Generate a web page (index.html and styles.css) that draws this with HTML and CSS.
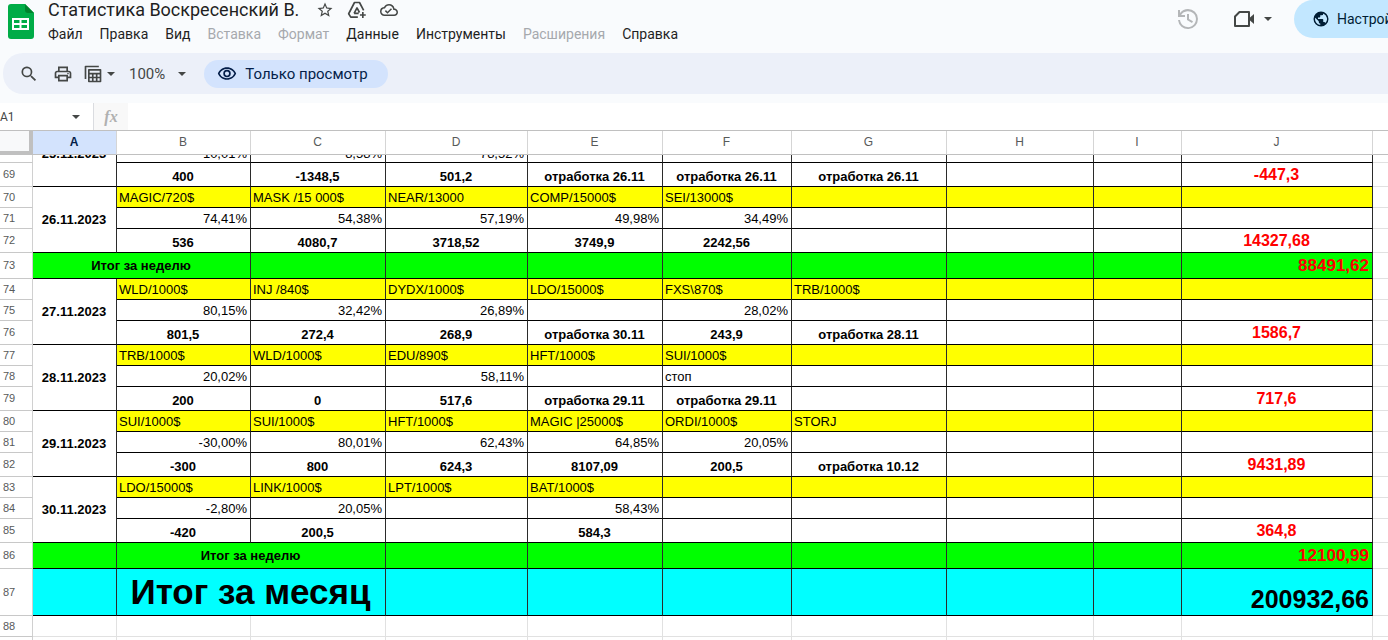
FILE: index.html
```
<!DOCTYPE html>
<html lang="ru">
<head>
<meta charset="utf-8">
<title>Статистика Воскресенский В.</title>
<link rel="stylesheet" href="styles.css">
</head>
<body>
<header class="top">
  <svg class="logo" viewBox="0 0 26 35" aria-hidden="true"><path fill="#00ac47" d="M3 0h14l9 9v23a3 3 0 0 1-3 3H3a3 3 0 0 1-3-3V3a3 3 0 0 1 3-3z"/><path fill="#00832d" d="M17 0l9 9h-6a3 3 0 0 1-3-3z"/><path fill="#fff" fill-rule="evenodd" d="M4 14h17v12H4zM6 16v3h5.500v-3zM13.500 16v3H19v-3zM6 21v3h5.500v-3zM13.500 21v3H19v-3z"/></svg>
  <div class="titles">
    <div class="title-row">
      <h1 class="title">Статистика Воскресенский В.</h1>
      <button class="icon-btn" aria-label="Пометить"><svg class="icon-18" viewBox="0 0 24 24"><path d="M22 9.240l-7.190-.620L12 2 9.190 8.630 2 9.240l5.460 4.730L5.820 21 12 17.270 18.180 21l-1.630-7.030L22 9.240zM12 15.400l-3.760 2.270 1-4.280-3.320-2.880 4.380-.380L12 6.100l1.710 4.040 4.380.380-3.320 2.880 1 4.280L12 15.400z"/></svg></button>
      <button class="icon-btn" aria-label="Добавить на Диск"><svg class="icon-20 line" viewBox="0 0 24 24"><path d="M13 20.500H4.500L2 16.500 9 3h6l5 9.500M8.500 16L12 9.500l3 5.500M8.500 16H14M19 14.500v7M15.500 18h7"/></svg></button>
      <button class="icon-btn" aria-label="Сохранено"><svg class="icon-18" viewBox="0 0 24 24"><path d="M19.350 10.040A7.490 7.490 0 0 0 12 4C9.110 4 6.600 5.640 5.350 8.040A5.994 5.994 0 0 0 0 14c0 3.310 2.690 6 6 6h13c2.760 0 5-2.240 5-5 0-2.640-2.050-4.780-4.650-4.960zM19 18H6c-2.210 0-4-1.790-4-4 0-2.050 1.530-3.760 3.560-3.970l1.070-.110.500-.950A5.469 5.469 0 0 1 12 6c2.620 0 4.880 1.860 5.390 4.430l.300 1.500 1.530.110A2.980 2.980 0 0 1 22 15c0 1.650-1.350 3-3 3zm-9-3.820l-2.090-2.090L6.500 13.500 10 17l6.010-6.010-1.410-1.410z"/></svg></button>
    </div>
    <nav class="menu">
      <button>Файл</button><button>Правка</button><button>Вид</button><button disabled>Вставка</button><button disabled>Формат</button><button>Данные</button><button>Инструменты</button><button disabled>Расширения</button><button>Справка</button>
    </nav>
  </div>
  <div class="actions">
    <button class="icon-btn muted" aria-label="История версий"><svg class="icon-24" viewBox="0 0 24 24"><path d="M12 2a10 10 0 0 0-8 4V3H2v7h7V8H5.100A8 8 0 1 1 4 13H2A10 10 0 1 0 12 2zm-1 5v6l5 3 1-1.700-4-2.400V7z"/></svg></button>
    <button class="icon-btn meet" aria-label="Видеовстреча"><svg class="icon-24" viewBox="0 0 24 24"><path fill="none" stroke="#444746" stroke-width="2" stroke-linejoin="round" d="M7.500 5H17v14H3V9.500z"/><path d="M18 10.500L22 7v10l-4-3.500z"/></svg><span class="caret"></span></button>
    <button class="share"><svg class="icon-18" viewBox="0 0 24 24"><path d="M12 2a10 10 0 1 0 0 20 10 10 0 0 0 0-20zm-1 17.930A7.990 7.990 0 0 1 4.210 10.210L9 15v1a2 2 0 0 0 2 2zm6.900-2.540A2 2 0 0 0 16 16h-1v-3a1 1 0 0 0-1-1H8v-2h2a1 1 0 0 0 1-1V7h2a2 2 0 0 0 2-2v-.410a7.990 7.990 0 0 1 2.900 12.800z"/></svg>Настройки Доступа</button>
  </div>
</header>
<div class="toolbar">
  <button class="icon-btn" aria-label="Поиск"><svg class="icon-20" viewBox="0 0 24 24"><path d="M15.500 14h-.790l-.280-.270A6.500 6.500 0 1 0 13.730 14.430l.270.280v.790l5 4.990L20.490 19zm-6 0a4.500 4.500 0 1 1 0-9 4.500 4.500 0 0 1 0 9z"/></svg></button>
  <button class="icon-btn" aria-label="Печать"><svg class="icon-20" viewBox="0 0 24 24"><path d="M19 8h-1V3H6v5H5c-1.660 0-3 1.340-3 3v6h4v4h12v-4h4v-6c0-1.660-1.340-3-3-3zM8 5h8v3H8zm8 14H8v-4h8zm2-4v-2H6v2H4v-4c0-.550.450-1 1-1h14c.550 0 1 .450 1 1v4z"/><circle cx="18" cy="11.500" r="1"/></svg></button>
  <button class="icon-btn filters" aria-label="Фильтры"><svg class="icon-20 line" viewBox="0 0 24 24"><path d="M3 18V3h16M7 7h14v14H7zM7 11.500h14M7 16.200h14M11.700 12v9M16.400 12v9"/></svg><span class="caret"></span></button>
  <button class="zoom">100%<span class="caret"></span></button>
  <button class="view-only"><svg class="icon-20" viewBox="0 0 24 24"><path d="M12 6a9.770 9.770 0 0 1 8.820 5.500 9.770 9.770 0 0 1-17.640 0A9.770 9.770 0 0 1 12 6m0-2C7 4 2.730 7.110 1 11.500 2.730 15.890 7 19 12 19s9.270-3.110 11-7.500C21.270 7.110 17 4 12 4zm0 5a2.500 2.500 0 1 1 0 5 2.500 2.500 0 0 1 0-5m0-2a4.500 4.500 0 1 0 0 9 4.500 4.500 0 0 0 0-9z"/></svg>Только просмотр</button>
</div>
<div class="formula">
  <input class="name-box" aria-label="Имя диапазона" value="A1"><span class="caret"></span>
  <span class="fx">fx</span>
  <input class="fx-input" aria-label="Формула">
</div>
<main class="grid">
<table class="sheet">
<colgroup><col class="c-n"><col class="c-a"><col class="c-b"><col class="c-c"><col class="c-d"><col class="c-e"><col class="c-f"><col class="c-g"><col class="c-h"><col class="c-i"><col class="c-j"><col></colgroup>
<thead><tr><th class="corner"></th><th class="active">A</th><th>B</th><th>C</th><th>D</th><th>E</th><th>F</th><th>G</th><th>H</th><th>I</th><th>J</th><th class="rest"></th></tr></thead>
<tbody>
<tr class="cut"><th></th><td rowspan="2" class="date"><div class="clip">25.11.2023</div></td><td><div class="clip">10,01%</div></td><td><div class="clip">8,58%</div></td><td><div class="clip">78,52%</div></td><td></td><td></td><td></td><td></td><td></td><td></td><td class="rest"></td></tr>
<tr class="sum"><th>69</th><td>400</td><td>-1348,5</td><td>501,2</td><td>отработка 26.11</td><td>отработка 26.11</td><td>отработка 26.11</td><td></td><td></td><td class="day">-447,3</td><td class="rest"></td></tr>
<tr class="names"><th>70</th><td rowspan="3" class="date">26.11.2023</td><td>MAGIC/720$</td><td>MASK /15 000$</td><td>NEAR/13000</td><td>COMP/15000$</td><td>SEI/13000$</td><td></td><td></td><td></td><td></td><td class="rest"></td></tr>
<tr class="pct"><th>71</th><td>74,41%</td><td>54,38%</td><td>57,19%</td><td>49,98%</td><td>34,49%</td><td></td><td></td><td></td><td></td><td class="rest"></td></tr>
<tr class="sum"><th>72</th><td>536</td><td>4080,7</td><td>3718,52</td><td>3749,9</td><td>2242,56</td><td></td><td></td><td></td><td class="day">14327,68</td><td class="rest"></td></tr>
<tr class="week"><th>73</th><td colspan="2">Итог за неделю</td><td></td><td></td><td></td><td></td><td></td><td></td><td></td><td class="total">88491,62</td><td class="rest"></td></tr>
<tr class="names"><th>74</th><td rowspan="3" class="date">27.11.2023</td><td>WLD/1000$</td><td>INJ /840$</td><td>DYDX/1000$</td><td>LDO/15000$</td><td>FXS\870$</td><td>TRB/1000$</td><td></td><td></td><td></td><td class="rest"></td></tr>
<tr class="pct"><th>75</th><td>80,15%</td><td>32,42%</td><td>26,89%</td><td></td><td>28,02%</td><td></td><td></td><td></td><td></td><td class="rest"></td></tr>
<tr class="sum"><th>76</th><td>801,5</td><td>272,4</td><td>268,9</td><td>отработка 30.11</td><td>243,9</td><td>отработка 28.11</td><td></td><td></td><td class="day">1586,7</td><td class="rest"></td></tr>
<tr class="names"><th>77</th><td rowspan="3" class="date">28.11.2023</td><td>TRB/1000$</td><td>WLD/1000$</td><td>EDU/890$</td><td>HFT/1000$</td><td>SUI/1000$</td><td></td><td></td><td></td><td></td><td class="rest"></td></tr>
<tr class="pct"><th>78</th><td>20,02%</td><td></td><td>58,11%</td><td></td><td class="word">стоп</td><td></td><td></td><td></td><td></td><td class="rest"></td></tr>
<tr class="sum"><th>79</th><td>200</td><td>0</td><td>517,6</td><td>отработка 29.11</td><td>отработка 29.11</td><td></td><td></td><td></td><td class="day">717,6</td><td class="rest"></td></tr>
<tr class="names"><th>80</th><td rowspan="3" class="date">29.11.2023</td><td>SUI/1000$</td><td>SUI/1000$</td><td>HFT/1000$</td><td>MAGIC |25000$</td><td>ORDI/1000$</td><td>STORJ</td><td></td><td></td><td></td><td class="rest"></td></tr>
<tr class="pct"><th>81</th><td>-30,00%</td><td>80,01%</td><td>62,43%</td><td>64,85%</td><td>20,05%</td><td></td><td></td><td></td><td></td><td class="rest"></td></tr>
<tr class="sum"><th>82</th><td>-300</td><td>800</td><td>624,3</td><td>8107,09</td><td>200,5</td><td>отработка 10.12</td><td></td><td></td><td class="day">9431,89</td><td class="rest"></td></tr>
<tr class="names"><th>83</th><td rowspan="3" class="date">30.11.2023</td><td>LDO/15000$</td><td>LINK/1000$</td><td>LPT/1000$</td><td>BAT/1000$</td><td></td><td></td><td></td><td></td><td></td><td class="rest"></td></tr>
<tr class="pct"><th>84</th><td>-2,80%</td><td>20,05%</td><td></td><td>58,43%</td><td></td><td></td><td></td><td></td><td></td><td class="rest"></td></tr>
<tr class="sum"><th>85</th><td>-420</td><td>200,5</td><td></td><td>584,3</td><td></td><td></td><td></td><td></td><td class="day">364,8</td><td class="rest"></td></tr>
<tr class="week"><th>86</th><td></td><td colspan="2">Итог за неделю</td><td></td><td></td><td></td><td></td><td></td><td></td><td class="total">12100,99</td><td class="rest"></td></tr>
<tr class="month"><th>87</th><td></td><td colspan="2" class="month-name">Итог за месяц</td><td></td><td></td><td></td><td></td><td></td><td></td><td class="month-total">200932,66</td><td class="rest"></td></tr>
<tr class="empty"><th>88</th><td></td><td></td><td></td><td></td><td></td><td></td><td></td><td></td><td></td><td></td><td class="rest"></td></tr>
<tr class="empty"><th></th><td></td><td></td><td></td><td></td><td></td><td></td><td></td><td></td><td></td><td></td><td class="rest"></td></tr>
</tbody>
</table>
</main>
</body>
</html>
```
FILE: styles.css
```
* { box-sizing: border-box; }
body {
  margin: 0;
  height: 100vh;
  overflow: hidden;
  display: flex;
  flex-direction: column;
  background: #f9fbfd;
  color: #444746;
  font-family: Roboto, "Liberation Sans", sans-serif;
  font-size: 14px;
}
button { border: 0; padding: 0; background: none; color: inherit; font: inherit; white-space: nowrap; }
svg { display: block; fill: currentColor; flex: none; }
.line { fill: none; stroke: currentColor; stroke-width: 2; stroke-linejoin: round; }
.icon-18 { width: 18px; height: 18px; }
.icon-20 { width: 20px; height: 20px; }
.icon-24 { width: 24px; height: 24px; }
.icon-btn { display: flex; align-items: center; gap: 4px; }
.caret { flex: none; border: 4px solid transparent; border-top-color: currentColor; border-bottom: 0; }

.top { display: flex; height: 53px; flex: none; padding-left: 8px; }
.logo { width: 26px; height: 35px; margin-top: 4px; }
.titles { margin-left: 14px; }
.title-row { display: flex; align-items: center; gap: 13px; height: 20px; }
.title { margin: 0 4px 0 0; font-size: 18px; line-height: 20px; font-weight: 400; color: #1f1f1f; }
.menu { display: flex; gap: 17px; margin-top: 4px; color: #1f1f1f; line-height: 20px; }
.menu button:disabled { color: #a6a9ad; }
.actions { display: flex; align-items: center; margin-left: auto; height: 37px; }
.muted { color: #b4b6b8; margin-right: 32px; }
.meet { margin-right: 22px; }
.meet .caret { margin-left: 4px; }
.share {
  display: flex; align-items: center; gap: 7px;
  width: 94px; height: 38px; padding-left: 18px; overflow: hidden;
  border-radius: 19px 0 0 19px; background: #c2e7ff; color: #001d35;
}

.toolbar {
  display: flex; align-items: center; flex: none;
  height: 41px; margin-left: 3px; padding-left: 16px; gap: 14px;
  border-radius: 20px 0 0 20px; background: #ecf0f9;
}
.filters { margin-left: -4px; }
.zoom { display: flex; align-items: center; gap: 13px; font-size: 15px; }
.view-only {
  display: flex; align-items: center; gap: 8px;
  height: 28px; margin-left: 4px; padding: 0 20px 0 13px;
  border-radius: 14px; background: #d3e3fd; color: #041e49; font-size: 15px;
}

.formula { display: flex; align-items: center; flex: none; height: 27px; margin-top: 9px; background: #fff; }
.name-box { width: 72px; border: 0; padding: 0; font: 12px Roboto, sans-serif; color: #444746; background: none; }
.fx {
  display: flex; align-items: center; justify-content: center;
  width: 35px; height: 27px; margin-left: 13px; border-left: 1px solid #dadce0;
  background: #f8f8f8; color: #b0b0b0; font: italic 700 16px "Liberation Serif", serif;
}
.fx-input { flex: 1; border: 0; outline: 0; background: none; }

.grid { flex: 1; overflow: hidden; background: #fff; border-top: 1px solid #c0c0c0; }
.sheet {
  width: 100%; table-layout: fixed; border-collapse: separate; border-spacing: 0;
  font: 13px "Liberation Sans", Arial, sans-serif; color: #000;
}
.c-n { width: 33px; } .c-a { width: 84px; } .c-b { width: 134px; } .c-c { width: 135px; }
.c-d { width: 142px; } .c-e { width: 135px; } .c-f { width: 129px; } .c-g { width: 155px; }
.c-h { width: 147px; } .c-i { width: 88px; } .c-j { width: 191px; }
.sheet th, .sheet td { padding: 0 3px 0 2px; line-height: 15px; white-space: nowrap; overflow: hidden; }
.sheet thead th {
  height: 24px; font-size: 12px; font-weight: 400; color: #575a5a;
  border-right: 1px solid #d5d5d5; border-bottom: 1px solid #c0c0c0;
}
.sheet thead .active { background: #d3e3fd; color: #041e49; font-weight: 700; }
.sheet thead .corner { background: #f8f9fa; border-right: 4px solid #c0c0c0; border-bottom: 4px solid #c0c0c0; }
.sheet tbody th {
  padding-left: 3px; font-size: 11px; font-weight: 400; color: #575a5a; text-align: left;
  border-right: 1px solid #d0d0d0; border-bottom: 1px solid #c8c8c8;
}
.sheet td { border-right: 1px solid #2b2b2b; border-bottom: 1px solid #000; }
.sheet .rest { border-right: 0; }
.sheet tbody .rest, .sheet .empty td { background: #fff; border-color: #e1e1e1; }
.cut { height: 8px; text-align: right; }
.clip { display: flex; align-items: flex-end; justify-content: flex-end; height: 6px; line-height: 15px; overflow: hidden; }
.sheet .date { text-align: center; font-weight: 700; }
.date .clip { justify-content: center; }
.cut .date, .cut td { vertical-align: top; }
.sum { height: 24px; text-align: center; font-weight: 700; }
.sheet .sum td { vertical-align: bottom; padding-bottom: 2px; }
.sheet .sum .day { vertical-align: middle; padding-bottom: 0; font-size: 16px; color: #f00; }
.names { height: 21px; }
.names td { background: #ff0; }
.names .date { background: #fff; }
.pct { height: 21px; text-align: right; }
.pct .word { text-align: left; }
.week { height: 26px; text-align: center; font-weight: 700; }
.week td { background: #0f0; }
.sheet .total { text-align: right; font-size: 17px; line-height: 20px; color: #f00; }
.month { height: 47px; font-weight: 700; }
.month td { background: #0ff; }
.sheet .month-name { text-align: center; font-size: 35px; line-height: 40px; }
.sheet .month-total { text-align: right; vertical-align: bottom; font-size: 25px; line-height: 32px; }
.empty { height: 21px; }
```
